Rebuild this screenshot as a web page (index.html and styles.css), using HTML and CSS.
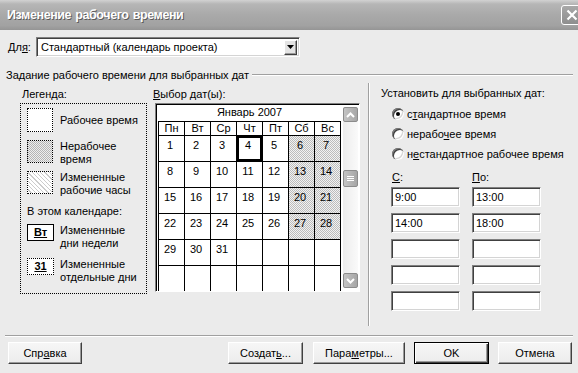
FILE: index.html
```html
<!DOCTYPE html>
<html lang="ru">
<head>
    <meta charset="UTF-8">
    <title>Изменение рабочего времени</title>
    <link rel="stylesheet" href="styles.css">
</head>
<body>
<div class="window">

    <div class="titlebar">
        <span class="title">Изменение рабочего времени</span>
        <span class="close">
            <svg width="12" height="12" viewBox="0 0 12 12"><path d="M1.5 1.5 L10.5 10.5 M10.5 1.5 L1.5 10.5" stroke="#fff" stroke-width="2.2"/></svg>
        </span>
    </div>

    <div class="for-row">
        <label class="for-label">Дл<u>я</u>:</label>
        <div class="combo">
            <span class="combo-text">Стандартный (календарь проекта)</span>
            <span class="combo-btn">
                <svg width="7" height="4" viewBox="0 0 7 4"><path d="M0 0 H7 L3.5 4 Z" fill="#000"/></svg>
            </span>
        </div>
    </div>

    <div class="group-title">
        <span>Задание рабочего времени для выбранных дат</span>
        <span class="group-line"></span>
    </div>

    <div class="main">
        <div class="legend-col">
            <div class="col-label legend-label">Легенда:</div>
            <div class="legend-box">
                <div class="legend-item single">
                    <span class="sw sw-white"></span>
                    <span class="legend-text">Рабочее время</span>
                </div>
                <div class="legend-item gap8">
                    <span class="sw sw-gray"></span>
                    <span class="legend-text">Нерабочее<br>время</span>
                </div>
                <div class="legend-item gap5">
                    <span class="sw sw-hatch"></span>
                    <span class="legend-text">Измененные<br>рабочие часы</span>
                </div>
                <div class="legend-sub">В этом календаре:</div>
                <div class="legend-item gap6">
                    <span class="sw-mark sw-day"><u>Вт</u></span>
                    <span class="legend-text">Измененные<br>дни недели</span>
                </div>
                <div class="legend-item gap8">
                    <span class="sw-mark sw-date"><u>31</u></span>
                    <span class="legend-text">Измененные<br>отдельные дни</span>
                </div>
            </div>
        </div>

        <div class="calendar-col">
            <div class="col-label"><u>В</u>ыбор дат(ы):</div>
            <div class="cal-box">
                <div class="cal-main">
                    <div class="month">Январь 2007</div>
                    <div class="grid">
                        <div class="dn">Пн</div><div class="dn">Вт</div><div class="dn">Ср</div><div class="dn">Чт</div><div class="dn">Пт</div><div class="dn">Сб</div><div class="dn">Вс</div>

                        <div class="d">1</div><div class="d">2</div><div class="d">3</div><div class="d sel">4</div><div class="d">5</div><div class="d off">6</div><div class="d off">7</div>
                        <div class="d">8</div><div class="d">9</div><div class="d">10</div><div class="d">11</div><div class="d">12</div><div class="d off">13</div><div class="d off">14</div>
                        <div class="d">15</div><div class="d">16</div><div class="d">17</div><div class="d">18</div><div class="d">19</div><div class="d off">20</div><div class="d off">21</div>
                        <div class="d">22</div><div class="d">23</div><div class="d">24</div><div class="d">25</div><div class="d">26</div><div class="d off">27</div><div class="d off">28</div>
                        <div class="d">29</div><div class="d">30</div><div class="d">31</div><div class="d"></div><div class="d"></div><div class="d"></div><div class="d"></div>
                        <div class="d"></div><div class="d"></div><div class="d"></div><div class="d"></div><div class="d"></div><div class="d"></div><div class="d"></div>
                    </div>
                </div>
                <div class="scrollbar">
                    <span class="sb-btn">
                        <svg width="9" height="6" viewBox="0 0 9 6"><path d="M1 5 L4.5 1.5 L8 5" fill="none" stroke="#fff" stroke-width="2"/></svg>
                    </span>
                    <span class="sb-thumb">
                        <svg width="7" height="7" viewBox="0 0 7 7"><path d="M0 1.5 H7 M0 3.5 H7 M0 5.5 H7" stroke="#fff" stroke-width="1"/></svg>
                    </span>
                    <span class="sb-btn sb-down">
                        <svg width="9" height="6" viewBox="0 0 9 6"><path d="M1 1 L4.5 4.5 L8 1" fill="none" stroke="#fff" stroke-width="2"/></svg>
                    </span>
                </div>
            </div>
        </div>

        <div class="vsep"></div>

        <div class="right-col">
            <div class="right-title">Установить для выбранных дат:</div>
            <div class="radios">
                <div class="radio-row"><span class="radio checked"></span><span class="radio-label">с<u>т</u>андартное время</span></div>
                <div class="radio-row"><span class="radio"></span><span class="radio-label">нерабо<u>ч</u>ее время</span></div>
                <div class="radio-row"><span class="radio"></span><span class="radio-label">н<u>е</u>стандартное рабочее время</span></div>
            </div>
            <div class="time-labels">
                <span class="time-from"><u>С</u>:</span>
                <span><u>П</u>о:</span>
            </div>
            <div class="times">
                <div class="field">9:00</div><div class="field">13:00</div>
                <div class="field">14:00</div><div class="field">18:00</div>
                <div class="field"></div><div class="field"></div>
                <div class="field"></div><div class="field"></div>
                <div class="field"></div><div class="field"></div>
            </div>
        </div>
    </div>

    <div class="hsep"></div>

    <div class="buttons">
        <button class="btn btn-help">Спр<u>а</u>вка</button>
        <button class="btn btn-new">Создат<u>ь</u>...</button>
        <button class="btn btn-params">Пара<u>м</u>етры...</button>
        <button class="btn btn-ok">OK</button>
        <button class="btn btn-cancel">Отмена</button>
    </div>

</div>
</body>
</html>
```

FILE: styles.css
```css
body {
    margin: 0;
    background: #ebebeb;
    font-family: "Liberation Sans", Arial, sans-serif;
    font-size: 11px;
    color: #000;
    overflow: hidden;
}

u {
    text-decoration-thickness: 1px;
    text-underline-offset: 1px;
}

.window {
    width: 578px;
    height: 373px;
    overflow: hidden;
}

/* title bar */
.titlebar {
    height: 30px;
    display: flex;
    align-items: center;
    justify-content: space-between;
    padding-left: 7px;
    background: linear-gradient(to bottom, #d2d2d2 0, #b6b6b6 4px, #a9a9a9 50%, #a2a2a2 85%, #959595 100%);
}

.title {
    color: #fff;
    font-weight: bold;
    font-size: 12.5px;
    letter-spacing: -0.4px;
    word-spacing: 1px;
    text-shadow: 1px 1px 0 #5a5a5a;
}

.close {
    width: 21px;
    height: 20px;
    margin-right: -4px;
    box-sizing: border-box;
    border: 1px solid #fff;
    border-radius: 3px;
    background: linear-gradient(#a8a8a8, #8e8e8e);
    display: flex;
    align-items: center;
    justify-content: center;
}

/* "for" combo */
.for-row {
    display: flex;
    align-items: center;
    margin-top: 7px;
    padding-left: 8px;
}

.for-label {
    width: 28px;
}

.combo {
    width: 264px;
    height: 20px;
    box-sizing: border-box;
    display: flex;
    align-items: center;
    justify-content: space-between;
    background: #fff;
    border: 1px solid;
    border-color: #808080 #fff #fff #808080;
    box-shadow: inset 1px 1px #404040, inset -1px -1px #d4d4d4;
    padding: 0 2px 0 4px;
}

.combo-btn {
    width: 13px;
    height: 15px;
    box-sizing: border-box;
    display: flex;
    align-items: center;
    justify-content: center;
    background: #e4e4e4;
    border: 1px solid;
    border-color: #fff #404040 #404040 #fff;
    box-shadow: inset -1px -1px #9a9a9a;
}

/* group heading */
.group-title {
    display: flex;
    align-items: center;
    height: 14px;
    line-height: 14px;
    margin-top: 11px;
    padding: 0 5px 0 6px;
}

.group-line {
    flex: 1;
    margin-left: 3px;
    border-top: 1px solid #a0a0a0;
    border-bottom: 1px solid #fff;
}

.main {
    display: flex;
    height: 243px;
    margin-top: 1px;
    padding-left: 20px;
}

.col-label {
    margin-top: 4px;
    line-height: 14px;
}

/* legend */
.legend-col {
    width: 127px;
}

.legend-label {
    padding-left: 2px;
}

.legend-box {
    height: 191px;
    margin-top: 2px;
    box-sizing: border-box;
    border: 1px dotted #000;
    padding: 4px 0 0 6px;
}

.legend-item {
    display: flex;
    align-items: flex-start;
}

.legend-item.single {
    align-items: center;
}

.gap5 { margin-top: 5px; }
.gap6 { margin-top: 6px; }
.gap8 { margin-top: 8px; }

.legend-text {
    margin-left: 7px;
    line-height: 13px;
    white-space: nowrap;
}

.sw {
    width: 26px;
    height: 23px;
    box-sizing: border-box;
    border: 1px dotted #000;
    flex-shrink: 0;
}

.sw-white {
    height: 24px;
    background: #fff;
}

.sw-gray {
    background: repeating-conic-gradient(#b4b4b4 0 25%, #eeeeee 0 50%) 0 0 / 2px 2px;
}

.sw-hatch {
    background: repeating-linear-gradient(45deg, #fff 0 2px, #cccccc 2px 3px);
}

.legend-sub {
    margin-top: 8px;
    line-height: 13px;
}

.sw-mark {
    width: 27px;
    height: 17px;
    box-sizing: border-box;
    flex-shrink: 0;
    background: #fff;
    font-weight: bold;
    text-align: center;
    line-height: 15px;
}

.sw-day {
    border: 1px solid #000;
}

.sw-date {
    border: 1px dotted #000;
}

.legend-item .sw-mark + .legend-text {
    margin-left: 6px;
}

/* calendar */
.calendar-col {
    margin-left: 6px;
}

.cal-box {
    width: 205px;
    height: 189px;
    margin: 2px 0 0 2px;
    box-sizing: border-box;
    display: flex;
    overflow: hidden;
    background: #fff;
    border: 1px solid;
    border-color: #808080 #fff #fff #808080;
    box-shadow: inset 1px 1px #000;
    padding: 0 1px 0 2px;
}

.cal-main {
    width: 183px;
}

.month {
    height: 17px;
    line-height: 17px;
    text-align: center;
}

.grid {
    display: grid;
    grid-template-columns: repeat(7, 25px);
    grid-template-rows: 13px repeat(6, 25px);
    gap: 1px;
    background: #000;
    border: 1px solid #000;
}

.dn {
    background: #fff;
    text-align: center;
    line-height: 13px;
}

.d {
    background: #fff;
    text-align: center;
    padding: 3px 3px 0 0;
    line-height: 13px;
}

.d.off {
    background: repeating-conic-gradient(#bcbcbc 0 25%, #f2f2f2 0 50%) 0 0 / 2px 2px;
}

.d.sel {
    box-shadow: inset 0 0 0 2px #000;
}

.scrollbar {
    width: 15px;
    height: 181px;
    margin: 3px 0 0 2px;
    display: flex;
    flex-direction: column;
    background: linear-gradient(to right, #ececec, #fafafa);
}

.sb-btn,
.sb-thumb {
    width: 15px;
    height: 15px;
    box-sizing: border-box;
    display: flex;
    align-items: center;
    justify-content: center;
    border: 1px solid #8c8c8c;
    border-radius: 2px;
    background: linear-gradient(to right, #c4c4c4, #a6a6a6);
}

.sb-thumb {
    height: 17px;
    margin-top: 48px;
}

.sb-down {
    margin-top: auto;
}

/* right panel */
.vsep {
    margin-left: 8px;
    width: 0;
    border-left: 1px solid #a0a0a0;
    border-right: 1px solid #fff;
}

.right-col {
    margin-left: 11px;
}

.right-title {
    margin-top: 3px;
    line-height: 14px;
}

.radios {
    margin-top: 4px;
}

.radio-row {
    display: flex;
    align-items: center;
    height: 20px;
    padding-left: 11px;
}

.radio {
    width: 12px;
    height: 12px;
    border-radius: 50%;
    background: #fff;
    box-shadow: inset 1px 1px #808080, inset 2px 2px #404040, inset -1px -1px #fff, inset -2px -2px #d4d4d4;
    display: flex;
    align-items: center;
    justify-content: center;
}

.radio.checked::after {
    content: "";
    width: 4px;
    height: 4px;
    border-radius: 50%;
    background: #000;
}

.radio-label {
    margin-left: 3px;
}

.time-labels {
    display: flex;
    margin-top: 6px;
    padding-left: 11px;
    line-height: 14px;
}

.time-from {
    width: 80px;
}

.times {
    display: grid;
    grid-template-columns: 69px 69px;
    grid-auto-rows: 20px;
    column-gap: 12px;
    row-gap: 6px;
    margin-top: 3px;
    padding-left: 10px;
}

.field {
    box-sizing: border-box;
    background: #fff;
    border: 1px solid;
    border-color: #808080 #fff #fff #808080;
    box-shadow: inset 1px 1px #404040, inset -1px -1px #d4d4d4;
    padding-left: 3px;
    line-height: 18px;
}

/* bottom buttons */
.hsep {
    margin: 9px 5px 0;
    border-top: 1px solid #a0a0a0;
    border-bottom: 1px solid #fff;
}

.buttons {
    display: flex;
    margin-top: 5px;
    padding: 0 6px 0 8px;
}

.btn {
    height: 22px;
    box-sizing: border-box;
    padding: 0;
    font-family: inherit;
    font-size: 11px;
    color: #000;
    background: linear-gradient(#f6f6f6, #ececec);
    border: 1px solid;
    border-color: #fff #404040 #404040 #fff;
    box-shadow: inset -1px -1px #9a9a9a;
}

.btn-help { width: 74px; margin-right: auto; }
.btn-new { width: 75px; margin-right: 10px; }
.btn-params { width: 92px; margin-right: 9px; }
.btn-ok { width: 75px; margin-right: 9px; }
.btn-cancel { width: 74px; }

.btn-ok {
    border-color: #000;
    box-shadow: inset 1px 1px #fff, inset -1px -1px #404040, inset -2px -2px #9a9a9a;
}
```
